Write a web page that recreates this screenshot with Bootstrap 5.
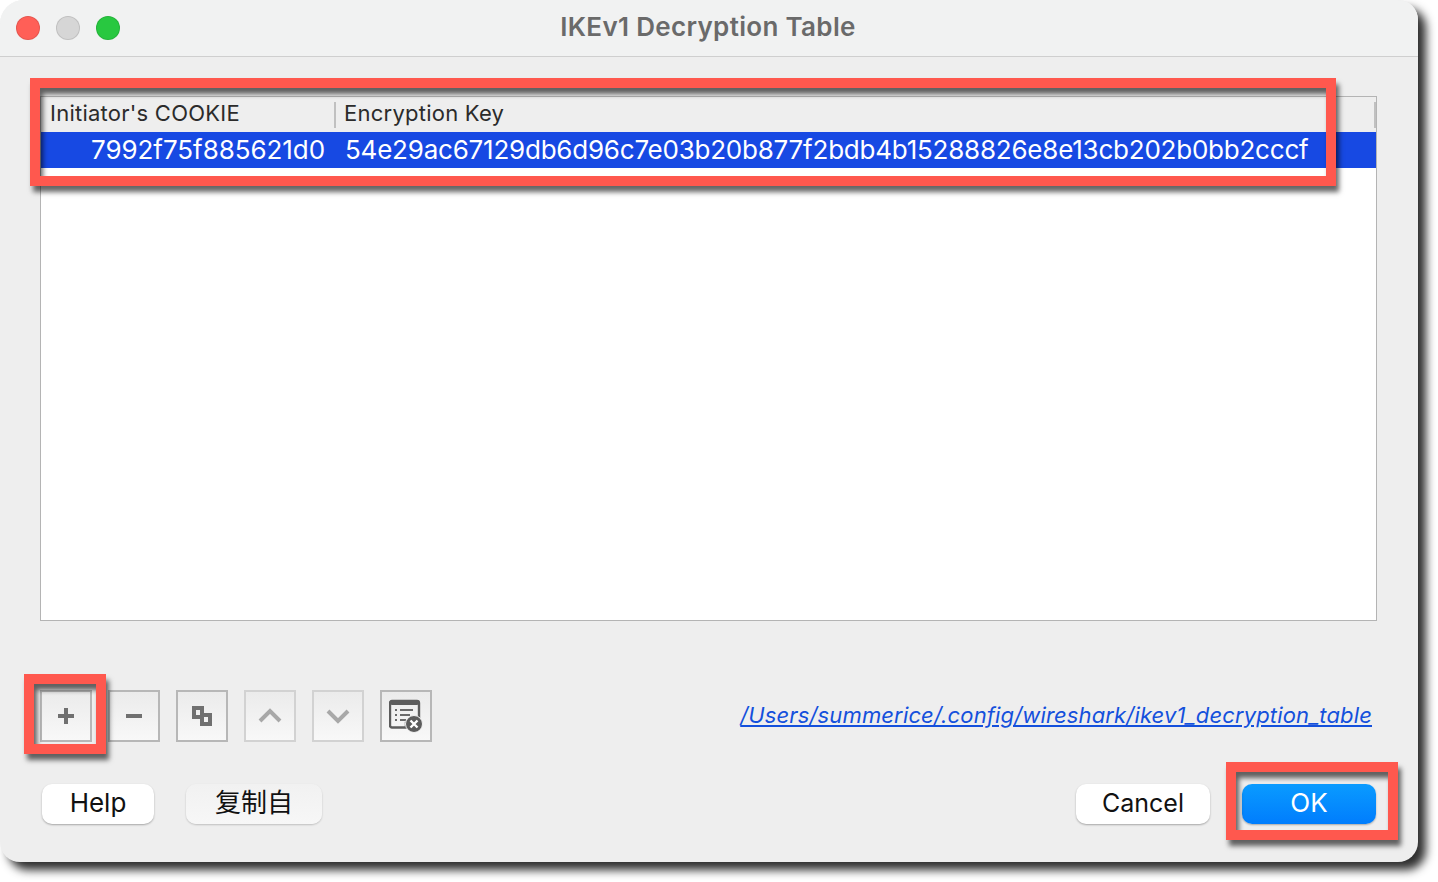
<!DOCTYPE html>
<html lang="en">
<head>
    <meta charset="UTF-8">
    <meta name="viewport" content="width=device-width, initial-scale=1.0">
    <title>IKEv1 Decryption Table</title>
    <link href="https://cdn.jsdelivr.net/npm/bootstrap@5.3.0/dist/css/bootstrap.min.css" rel="stylesheet">
    <style>
        html, body { height: 882px; overflow: hidden; }
        body { background: #fff; font-family: Inter, "Noto Sans CJK SC", sans-serif; color: #111; }
        .win { width: 1418px; height: 862px; background: #eeeeee; border-radius: 24px 20px 20px 20px; box-shadow: 8px 8px 10px rgba(0,0,0,.82); overflow: hidden; }
        .win-bar { height: 57px; background: #f1f2f2; border-bottom: 1px solid #cfcfcf; padding-left: 16px; }
        .light { width: 24px; height: 24px; border-radius: 50%; border: 1px solid rgba(0,0,0,.1); margin-right: 16px; }
        .light-red { background: #ff5f57; }
        .light-gray { background: #d6d6d6; }
        .light-green { background: #28c840; }
        .win-title { font-size: 26px; letter-spacing: .32px; font-weight: 600; color: #6a6a6a; left: 0; right: 2px; text-align: center; line-height: 54px; top: 0; }
        .tbl-frame { margin: 39px 41px 0 40px; height: 525px; background: #fff; border: 1px solid #b4b4b4; }
        .tbl-head { height: 35px; background: #eeeeee; font-size: 22px; letter-spacing: .24px; line-height: 32px; color: #2b2b2b; }
        .head-a { width: 293px; padding-left: 9px; }
        .head-b { flex: 1; padding-left: 8px; }
        .head-sep { width: 2px; height: 26px; background: #c0c0c0; align-self: center; }
        .tbl-row { height: 36px; background: #1749e3; color: #fff; font-size: 26px; line-height: 36px; }
        .cell-a { width: 284px; text-align: right; letter-spacing: -.06px; }
        .cell-b { padding-left: 20px; white-space: nowrap; letter-spacing: -.22px; }
        .tool-row { margin: 69px 46px 0 40px; height: 52px; }
        .tool-btn { width: 52px; height: 52px; border: 2px solid #b7b7b7; background: linear-gradient(#ebebeb, #f8f8f8); border-radius: 0; padding: 0; color: #707070; }
        .tool-btn.off { border-color: #d2d2d2; color: #a8a8a8; }
        .tool-gap { margin-right: 16px; }
        .path-link { font-size: 22px; letter-spacing: .14px; line-height: 30px; margin-bottom: 2px; font-style: italic; color: #1450dc; text-decoration: underline; }
        .foot-row { margin: 42px 42px 0 42px; }
        .mac-btn { height: 40px; background: #fff; border: 0; border-radius: 10px; box-shadow: 0 1px 2px rgba(0,0,0,.3); font-size: 26px; line-height: 36px; padding: 0 0 2px; color: #111; }
        .mac-help { width: 112px; margin-right: 32px; }
        .mac-copy { width: 136px; background: linear-gradient(#f1f1f1, #f7f7f7); box-shadow: 0 1px 2px rgba(0,0,0,.2); }
        .mac-cancel { width: 134px; margin-right: 32px; font-size: 25px; }
        .mac-ok { width: 134px; color: #fff; background: linear-gradient(#0a9bff, #007dfd); }
        .mark-box { position: absolute; border: 10px solid #ff584e; box-shadow: 3px 6px 5px rgba(0,0,0,.6), inset 3px 6px 5px rgba(0,0,0,.6); }
        .mark-table { left: 30px; top: 78px; width: 1306px; height: 108px; }
        .mark-plus { left: 24px; top: 674px; width: 82px; height: 80px; }
        .mark-ok { left: 1226px; top: 762px; width: 172px; height: 78px; }
    </style>
</head>
<body class="position-relative m-0">
    <div class="win position-relative">
        <div class="win-bar d-flex align-items-center position-relative">
            <span class="light light-red"></span>
            <span class="light light-gray"></span>
            <span class="light light-green"></span>
            <div class="win-title position-absolute">IKEv1 Decryption Table</div>
        </div>

        <div class="tbl-frame">
            <div class="tbl-head d-flex">
                <div class="head-a">Initiator's COOKIE</div>
                <div class="head-sep"></div>
                <div class="head-b">Encryption Key</div>
                <div class="head-sep"></div>
            </div>
            <div class="tbl-row d-flex">
                <div class="cell-a">7992f75f885621d0</div>
                <div class="cell-b">54e29ac67129db6d96c7e03b20b877f2bdb4b15288826e8e13cb202b0bb2cccf</div>
            </div>
        </div>

        <div class="tool-row d-flex align-items-center">
            <button class="tool-btn tool-gap d-flex align-items-center justify-content-center">
                <svg width="18" height="18" viewBox="0 0 18 18"><path d="M9 1v16M1 9h16" stroke="currentColor" stroke-width="4" fill="none"/></svg>
            </button>
            <button class="tool-btn tool-gap d-flex align-items-center justify-content-center">
                <svg width="18" height="18" viewBox="0 0 18 18"><path d="M1 9h16" stroke="currentColor" stroke-width="4" fill="none"/></svg>
            </button>
            <button class="tool-btn tool-gap d-flex align-items-center justify-content-center">
                <svg width="20" height="20" viewBox="0 0 20 20"><path d="M2 2h8v9H2z" stroke="currentColor" stroke-width="4" fill="none"/><path d="M10 9h8v9h-8z" stroke="currentColor" stroke-width="4" fill="#f3f3f3"/></svg>
            </button>
            <button class="tool-btn off tool-gap d-flex align-items-center justify-content-center">
                <svg width="24" height="16" viewBox="0 0 24 16"><path d="M2 13 12 3l10 10" stroke="currentColor" stroke-width="4" fill="none"/></svg>
            </button>
            <button class="tool-btn off tool-gap d-flex align-items-center justify-content-center">
                <svg width="24" height="16" viewBox="0 0 24 16"><path d="M2 3l10 10L22 3" stroke="currentColor" stroke-width="4" fill="none"/></svg>
            </button>
            <button class="tool-btn d-flex align-items-center justify-content-center">
                <svg width="34" height="34" viewBox="0 0 34 34">
                    <path d="M3 2h25a2 2 0 0 1 2 2V24H17v4.500H3a2 2 0 0 1-2-2V4a2 2 0 0 1 2-2z" fill="none" stroke="#5c5c5c" stroke-width="2.4"/>
                    <rect x="1" y="1" width="29" height="5" rx="2" fill="#5c5c5c"/>
                    <path d="M6 11h2M11 11h13M6 16h2M11 16h10M6 21h2M11 21h6" stroke="#6a6a6a" stroke-width="2"/>
                    <circle cx="25" cy="25" r="8.500" fill="#5c5c5c" stroke="#f2f2f2" stroke-width="1"/>
                    <path d="M21.500 21.500l7 7M28.500 21.500l-7 7" stroke="#fff" stroke-width="2.400"/>
                </svg>
            </button>
            <a class="path-link ms-auto" href="#">/Users/summerice/.config/wireshark/ikev1_decryption_table</a>
        </div>

        <div class="foot-row d-flex">
            <button class="mac-btn mac-help">Help</button>
            <button class="mac-btn mac-copy">复制自</button>
            <button class="mac-btn mac-cancel ms-auto">Cancel</button>
            <button class="mac-btn mac-ok">OK</button>
        </div>
    </div>

    <!-- red annotation boxes drawn over the screenshot -->
    <div class="mark-box mark-table"></div>
    <div class="mark-box mark-plus"></div>
    <div class="mark-box mark-ok"></div>

    <script src="https://cdn.jsdelivr.net/npm/bootstrap@5.3.0/dist/js/bootstrap.bundle.min.js"></script>
</body>
</html>
